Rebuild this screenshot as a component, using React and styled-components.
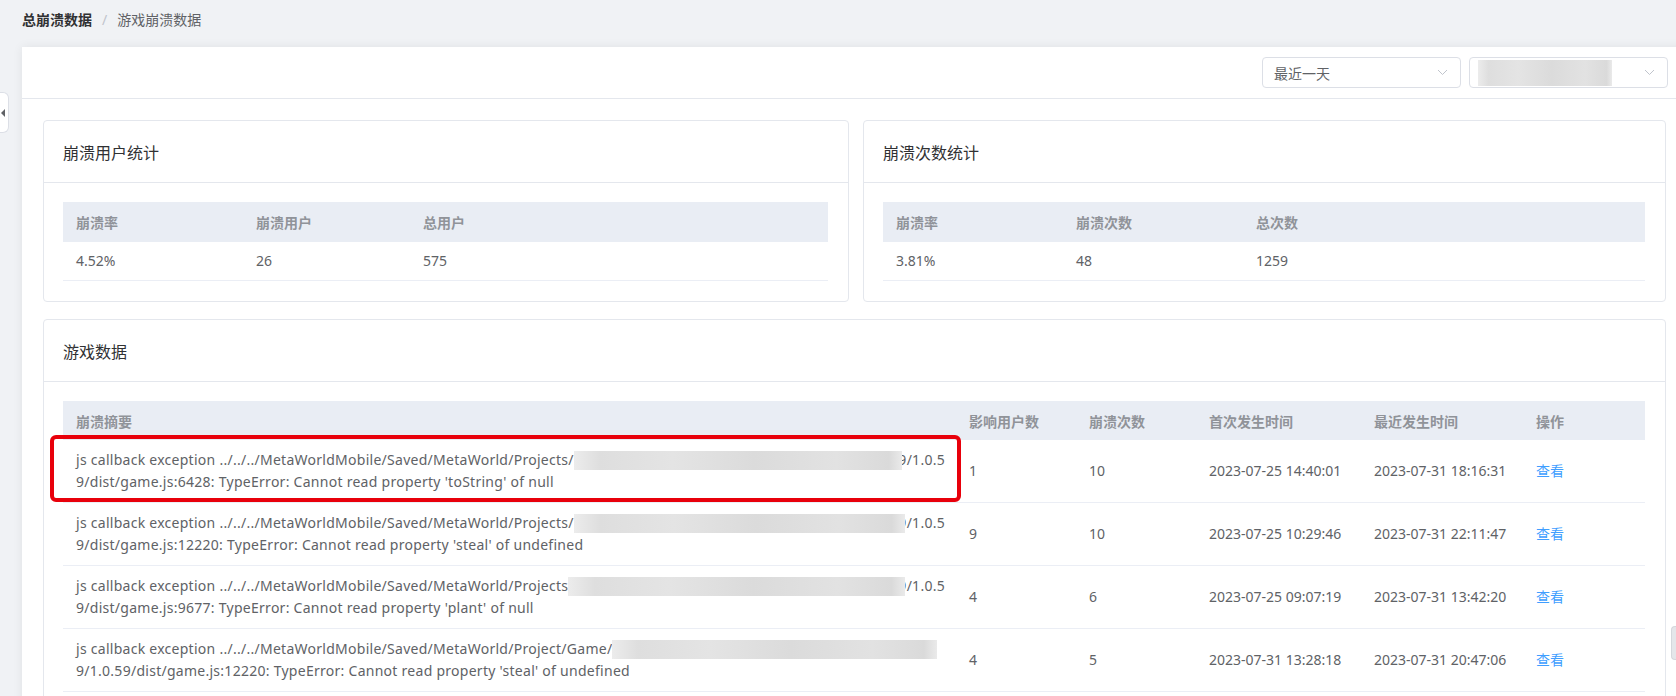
import React from 'react';
import styled, { createGlobalStyle } from 'styled-components';

const Global = createGlobalStyle`
  html, body {
    margin: 0;
    padding: 0;
    background: #f0f2f5;
    overflow: hidden;
  }
  body {
    font-family: "Microsoft YaHei", "Noto Sans", "Noto Sans CJK SC", sans-serif;
    font-size: 14px;
    color: #606266;
  }
`;

const Page = styled.div`
  position: relative;
  width: 1676px;
  height: 696px;
  overflow: hidden;
`;

const Crumbs = styled.div`
  display: flex;
  align-items: center;
  height: 20px;
  padding: 9px 0 0 22px;
  margin-bottom: 18px;
  font-size: 14px;
`;

const CrumbStrong = styled.span`
  color: #303133;
  font-weight: bold;
`;

const CrumbSep = styled.span`
  color: #c0c4cc;
  margin: 0 10px;
`;

const CrumbText = styled.span`
  color: #606266;
`;

const SideTab = styled.div`
  position: absolute;
  left: 0;
  top: 92px;
  width: 8px;
  height: 39px;
  background: #fff;
  border: 1px solid #dcdfe6;
  border-left: none;
  border-radius: 0 6px 6px 0;
  display: flex;
  align-items: center;

  &::after {
    content: '';
    border-right: 4px solid #606266;
    border-top: 4px solid transparent;
    border-bottom: 4px solid transparent;
    margin-left: 1px;
  }
`;

const EdgeThumb = styled.div`
  position: absolute;
  right: 0;
  top: 626px;
  width: 4px;
  height: 32px;
  background: #e4e6ea;
  border-radius: 4px 0 0 4px;
  border: 1px solid #d4d7dc;
  border-right: none;
`;

const Main = styled.div`
  width: 1665px;
  margin-left: 22px;
  background: #fff;
  box-shadow: 0 0 10px rgba(0, 0, 0, 0.07);
  min-height: 700px;
`;

const Toolbar = styled.div`
  display: flex;
  justify-content: flex-end;
  gap: 8px;
  height: 41px;
  padding: 10px 19px 0 0;
  border-bottom: 1px solid #e4e7ed;
`;

const Select = styled.div`
  box-sizing: border-box;
  width: 199px;
  height: 31px;
  border: 1px solid #dcdfe6;
  border-radius: 4px;
  display: flex;
  align-items: center;
  padding: 0 12px 0 ${p => (p.$blurred ? '8px' : '11px')};
  color: #606266;
  font-size: 14px;
`;

const SelectValue = styled.span`
  flex: 1;
  display: flex;
  align-items: center;
`;

const Chevron = () => (
  <svg width="11" height="7" viewBox="0 0 11 7" fill="none">
    <path d="M1 1l4.5 4.5L10 1" stroke="#c0c4cc" strokeWidth="1" />
  </svg>
);

const Blur = styled.span`
  display: inline-block;
  height: ${p => p.$h || 19}px;
  width: ${p => (p.$w ? `${p.$w}px` : 'auto')};
  flex: ${p => (p.$w ? 'none' : 1)};
  margin-right: ${p => p.$overlap || 0}px;
  position: relative;
  z-index: 1;
  background: linear-gradient(90deg, #ececec 0%, #dedede 8%, #e4e4e4 30%, #dbdbdb 55%, #e2e2e2 80%, #dadada 96%, #eaeaea 100%);
`;

const Body = styled.div`
  padding: 21px 21px 0;
`;

const StatGrid = styled.div`
  display: grid;
  grid-template-columns: 806px 1fr;
  gap: 14px;
  margin-bottom: 17px;
`;

const Card = styled.div`
  border: 1px solid #e4e7ed;
  border-radius: 4px;
  background: #fff;
`;

const CardHeader = styled.div`
  height: 61px;
  display: flex;
  align-items: center;
  padding: 0 19px;
  border-bottom: 1px solid #e4e7ed;
  font-size: 16px;
  color: #303133;
`;

const CardBody = styled.div`
  padding: 19px 20px 20px 19px;
`;

const Table = styled.table`
  width: 100%;
  border-collapse: collapse;
  table-layout: fixed;
`;

const Th = styled.th`
  background: #e9edf4;
  color: #909399;
  font-weight: bold;
  text-align: left;
  font-size: 14px;
  height: ${p => p.$h || 40}px;
  padding: 0 13px;
  box-sizing: border-box;
  width: ${p => (p.$w ? `${p.$w}px` : 'auto')};
`;

const Td = styled.td`
  color: #606266;
  font-size: 14px;
  line-height: 22px;
  padding: ${p => (p.$tall ? '9px 13px' : '8px 13px')};
  border-bottom: 1px solid #ebeef5;
  vertical-align: middle;
  white-space: nowrap;
  position: relative;
`;

const Link = styled.a`
  color: #409eff;
  cursor: pointer;
`;

const Line = styled.div`
  display: flex;
  align-items: center;
  width: ${p => p.$w || 869}px;
  white-space: nowrap;
  letter-spacing: 0.27px;
`;

const Highlight = styled.div`
  position: absolute;
  left: -13px;
  top: -5px;
  width: 903px;
  height: 59px;
  border: 4px solid #e8000b;
  border-radius: 6px;
  pointer-events: none;
`;

const StatCard = ({ title, widths, heads, values }) => (
  <Card>
    <CardHeader>{title}</CardHeader>
    <CardBody>
      <Table>
        <thead>
          <tr>
            {heads.map((h, i) => (
              <Th key={h} $w={widths[i]}>{h}</Th>
            ))}
          </tr>
        </thead>
        <tbody>
          <tr>
            {values.map((v, i) => (
              <Td key={i}>{v}</Td>
            ))}
          </tr>
        </tbody>
      </Table>
    </CardBody>
  </Card>
);

const rows = [
  {
    head: 'js callback exception ../../../MetaWorldMobile/Saved/MetaWorld/Projects/',
    tail: '9/1.0.5',
    overlap: -4,
    second: "9/dist/game.js:6428: TypeError: Cannot read property 'toString' of null",
    users: 1, count: 10, first: '2023-07-25 14:40:01', last: '2023-07-31 18:16:31',
    marked: true,
  },
  {
    head: 'js callback exception ../../../MetaWorldMobile/Saved/MetaWorld/Projects/',
    tail: '9/1.0.5',
    overlap: -7,
    second: "9/dist/game.js:12220: TypeError: Cannot read property 'steal' of undefined",
    users: 9, count: 10, first: '2023-07-25 10:29:46', last: '2023-07-31 22:11:47',
  },
  {
    head: 'js callback exception ../../../MetaWorldMobile/Saved/MetaWorld/Projects',
    tail: '9/1.0.5',
    overlap: -7,
    second: "9/dist/game.js:9677: TypeError: Cannot read property 'plant' of null",
    users: 4, count: 6, first: '2023-07-25 09:07:19', last: '2023-07-31 13:42:20',
  },
  {
    head: 'js callback exception ../../../MetaWorldMobile/Saved/MetaWorld/Project/Game/',
    tail: null,
    second: "9/1.0.59/dist/game.js:12220: TypeError: Cannot read property 'steal' of undefined",
    users: 4, count: 5, first: '2023-07-31 13:28:18', last: '2023-07-31 20:47:06',
  },
];

const App = () => (
  <>
    <Global />
    <Page>
      <Crumbs>
        <CrumbStrong>总崩溃数据</CrumbStrong>
        <CrumbSep>/</CrumbSep>
        <CrumbText>游戏崩溃数据</CrumbText>
      </Crumbs>
      <SideTab />
      <Main>
        <Toolbar>
          <Select>
            <SelectValue>最近一天</SelectValue>
            <Chevron />
          </Select>
          <Select $blurred>
            <SelectValue>
              <Blur $w={134} $h={26} />
            </SelectValue>
            <Chevron />
          </Select>
        </Toolbar>
        <Body>
          <StatGrid>
            <StatCard
              title="崩溃用户统计"
              widths={[180, 167]}
              heads={['崩溃率', '崩溃用户', '总用户']}
              values={['4.52%', '26', '575']}
            />
            <StatCard
              title="崩溃次数统计"
              widths={[180, 180]}
              heads={['崩溃率', '崩溃次数', '总次数']}
              values={['3.81%', '48', '1259']}
            />
          </StatGrid>
          <Card>
            <CardHeader>游戏数据</CardHeader>
            <CardBody>
              <Table>
                <thead>
                  <tr>
                    <Th $h={39}>崩溃摘要</Th>
                    <Th $h={39} $w={120}>影响用户数</Th>
                    <Th $h={39} $w={120}>崩溃次数</Th>
                    <Th $h={39} $w={165}>首次发生时间</Th>
                    <Th $h={39} $w={162}>最近发生时间</Th>
                    <Th $h={39} $w={122}>操作</Th>
                  </tr>
                </thead>
                <tbody>
                  {rows.map((r, i) => (
                    <tr key={i}>
                      <Td $tall>
                        {r.marked && <Highlight />}
                        <Line $w={r.tail ? 869 : 861}>
                          <span>{r.head}</span>
                          <Blur $overlap={r.tail ? r.overlap : 0} />
                          {r.tail && <span>{r.tail}</span>}
                        </Line>
                        <Line>{r.second}</Line>
                      </Td>
                      <Td>{r.users}</Td>
                      <Td>{r.count}</Td>
                      <Td>{r.first}</Td>
                      <Td>{r.last}</Td>
                      <Td><Link>查看</Link></Td>
                    </tr>
                  ))}
                </tbody>
              </Table>
            </CardBody>
          </Card>
        </Body>
      </Main>
      <EdgeThumb />
    </Page>
  </>
);

export default App;
